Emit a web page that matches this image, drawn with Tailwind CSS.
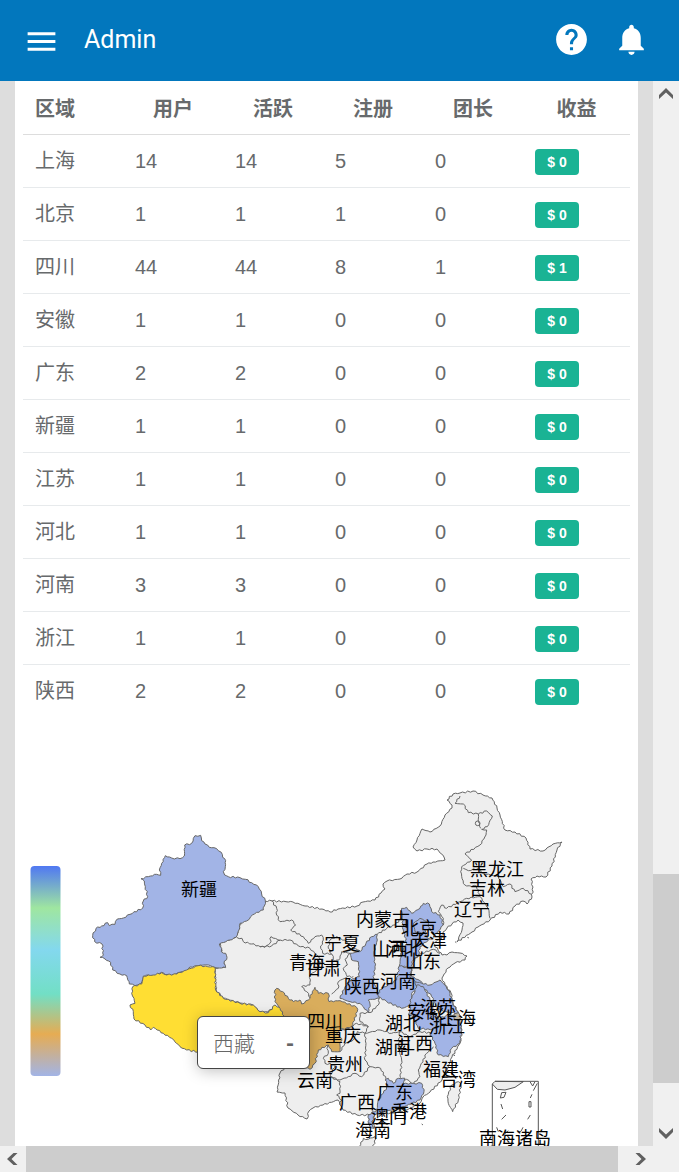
<!DOCTYPE html>
<html lang="zh-CN">
<head>
    <meta charset="UTF-8">
    <meta name="viewport" content="width=device-width, initial-scale=1.0">
    <title>Admin</title>
    <script src="https://cdn.jsdelivr.net/npm/@tailwindcss/browser@4"></script>
</head>
<body class="flex h-screen flex-col overflow-hidden bg-[#ddd] font-['Liberation_Sans','Noto_Sans_CJK_SC',sans-serif] text-[#676a6c]">
    <header class="flex h-[81px] shrink-0 items-center bg-[#0277bd] px-[23px] pb-[2px] text-white">
        <button type="button" aria-label="Menu" class="mt-1">
            <svg class="size-[37px]" viewBox="0 0 24 24" fill="currentColor"><path d="M3 18h18v-2H3v2zm0-5h18v-2H3v2zm0-7v2h18V6H3z"/></svg>
        </button>
        <h1 class="ml-6 flex-1 font-[Roboto] text-[25px] font-normal">Admin</h1>
        <div class="flex gap-[23px] pr-[6px]">
            <button type="button" aria-label="Help">
                <svg class="size-[37px]" viewBox="0 0 24 24" fill="currentColor"><path d="M12 2C6.48 2 2 6.48 2 12s4.480 10 10 10 10-4.480 10-10S17.520 2 12 2zm1 17h-2v-2h2v2zm2.070-7.750l-.9.920C13.450 12.900 13 13.500 13 15h-2v-.5c0-1.100.45-2.100 1.170-2.830l1.240-1.260c.37-.36.59-.86.59-1.410 0-1.100-.9-2-2-2s-2 .9-2 2H8c0-2.210 1.790-4 4-4s4 1.790 4 4c0 .88-.36 1.680-.93 2.250z"/></svg>
            </button>
            <button type="button" aria-label="Notifications">
                <svg class="size-[37px]" viewBox="0 0 24 24" fill="currentColor"><path d="M12 22c1.100 0 2-.9 2-2h-4c0 1.100.89 2 2 2zm6-6v-5c0-3.070-1.640-5.640-4.500-6.320V4c0-.83-.67-1.500-1.500-1.500s-1.500.67-1.500 1.500v.68C7.630 5.360 6 7.920 6 11v5l-2 2v1h16v-1l-2-2z"/></svg>
            </button>
        </div>
    </header>

    <div class="flex min-h-0 flex-1">
        <main class="min-w-0 flex-1 overflow-hidden px-[15px]">
            <div class="min-h-full bg-white">
                <div class="px-2">
                    <table class="w-full table-fixed border-collapse text-left text-xl">
                        <colgroup>
                            <col class="w-[100px]"><col class="w-[100px]"><col class="w-[100px]"><col class="w-[100px]"><col class="w-[100px]"><col>
                        </colgroup>
                        <thead>
                            <tr class="h-[53px] border-b border-[#ddd]">
                                <th class="px-3 pt-[3px]">区域</th>
                                <th class="px-3 pt-[3px] text-center">用户</th>
                                <th class="px-3 pt-[3px] text-center">活跃</th>
                                <th class="px-3 pt-[3px] text-center">注册</th>
                                <th class="px-3 pt-[3px] text-center">团长</th>
                                <th class="px-3 pt-[3px] text-center">收益</th>
                            </tr>
                        </thead>
                        <tbody id="rows"></tbody>
                    </table>
                </div>

                <div class="relative">
                    <svg class="block w-full" viewBox="15 717 623 429" role="img" aria-label="用户分布">
                        <defs>
                            <linearGradient id="scale" x1="0" y1="0" x2="0" y2="1">
                                <stop offset="0" stop-color="#5078f2"/>
                                <stop offset=".2" stop-color="#9fe6a0"/>
                                <stop offset=".4" stop-color="#83d8ee"/>
                                <stop offset=".61" stop-color="#72dfc5"/>
                                <stop offset=".8" stop-color="#e6ac53"/>
                                <stop offset="1" stop-color="#a2b4e6"/>
                            </linearGradient>
                        </defs>

                        <rect x="30.500" y="866" width="30" height="210" rx="4" fill="url(#scale)"/>

                        <g id="map" fill="#eee" stroke="#666" stroke-linejoin="round">
                            <!-- mainland -->
                            <path data-step="4" d="M265 901L272 901 293 902 305 906 322 909 330 912 338 909 357 906 363 902 375 900 381 893 385 889 383 884 387 881 400 879 407 874 417 872 427 864 433 862 445 860 444 857 437 849 427 849 417 851 413 847 417 840 422 829 430 832 440 826 445 815 452 808 452 805 447 800 453 794 460 793 473 791 483 795 492 798 497 808 500 815 505 830 515 832 526 838 530 849 543 851 553 844 562 842 557 850 552 866 546 877 537 876 531 879 533 887 532 897 527 904 523 901 515 906 509 914 500 912 490 920 478 927 472 932 457 942 462 930 463 923 458 920 452 924 447 928 443 932 442 938 433 943 438 950 442 955 447 955 452 952 460 953 467 956 465 960 455 963 448 968 442 978 445 985 451 993 453 1003 458 1012 460 1023 462 1030 460 1043 452 1057 448 1067 442 1080 430 1092 423 1097 420 1103 407 1110 393 1113 375 1114 372 1119 375 1128 368 1123 370 1115 357 1115 343 1110 338 1100 323 1105 313 1108 309 1111 307 1119 298 1115 288 1108 285 1093 277 1092 280 1073 290 1062 300 1050 274 1007 268 1012 260 1012 253 1005 240 1003 223 998 216 990 215 968 225 967 220 943 236 937 242 920 255 910Z"/>
                            <g transform="translate(80 820) scale(.3333)" stroke-width="3">
                                <path data-step="12" fill="#a2b4e6" d="M345 47L362 46 365 62 375 72 388 82 402 83 415 92 424 97 428 112 437 122 436 140 430 155 434 165 445 170 480 173 497 178 515 188 530 195 538 207 545 222 556 242 553 258 550 270 530 277 512 290 500 303 480 310 477 330 468 352 450 360 418 372 425 385 424 395 437 400 441 412 432 430 437 443 425 444 404 443 385 435 360 436 330 441 320 455 300 457 275 466 255 465 245 457 235 463 228 470 197 466 188 478 182 492 165 497 148 492 140 467 120 462 98 450 92 427 75 417 60 412 70 405 66 372 44 365 38 347 48 325 65 318 83 308 88 317 105 313 112 297 130 294 150 283 188 264 190 243 203 230 196 200 193 183 183 176 205 170 230 163 242 166 238 150 245 130 256 107 275 114 300 116 313 108 314 75 335 70 340 55Z"/>
                                <path data-step="12" fill="none" d="M470 352L486 355 490 365 515 372 535 377 555 382 570 370 573 350 600 362"/>
                            </g>
                            <g transform="translate(120 950) scale(.3333)" stroke-width="3">
                                <path data-step="12" fill="#ffde33" d="M38 110L65 102 70 78 100 75 125 68 140 75 170 72 200 60 235 47 285 52 287 120 310 145 360 160 400 165 420 185 445 188 465 165 480 172 495 200 495 300 235 306 200 300 180 290 155 265 130 250 100 232 92 240 75 225 42 207 40 185 30 165 45 160 42 145 35 130Z"/>
                            </g>
                            <!-- inner provinces -->
                            <g transform="translate(260 880) scale(.3333)" stroke-width="3">
                                <g fill="none">
                                    <path data-step="12" d="M35 62L50 85 50 105 60 125 95 120 107 135 92 150 130 170 145 190 165 170 185 165 190 180 182 205 188 220 215 222 225 245 240 235 245 215 270 220"/>
                                    <path data-step="12" d="M215 222L205 205 210 180 230 170 260 185 280 205 300 212"/>
                                    <path data-step="12" d="M0 200L35 198 60 180 90 180 115 198 150 205 185 240 170 270 150 285 150 315 125 320 140 335 152 355"/>
                                    <path data-step="12" d="M270 220L255 238 262 255 250 265 262 290 280 290"/>
                                    <path data-step="12" d="M262 290L235 305 235 325 215 342"/>
                                    <path data-step="12" d="M352 163L380 145 405 135 428 110"/>
                                    <path data-step="12" d="M358 355L355 375 330 398 300 400 300 425 325 440 315 460 360 450 395 460 420 455 450 470 480 455 520 460"/>
                                    <path data-step="12" d="M315 460L318 490 315 540 330 560 362 565 378 597"/>
                                    <path data-step="12" d="M420 455L415 500 425 540 420 600"/>
                                    <path data-step="12" d="M240 445L255 450 290 430 325 440"/>
                                    <path data-step="12" d="M240 515L255 490 280 480 292 455 315 460"/>
                                    <path data-step="12" d="M175 510L200 490 205 520 190 535 195 550 225 555 210 590 240 600 265 590 285 580 305 590 330 560"/>
                                    <path data-step="12" d="M210 590L240 605 240 640 230 645 245 660 240 675"/>
                                    <path data-step="12" d="M520 500L500 520 475 570 480 590 460 612 440 598 420 600"/>
                                </g>
                                <path data-step="12" fill="#d9ad5c" d="M50 325L68 335 85 355 100 365 120 360 125 372 145 360 165 322 175 340 205 340 207 365 240 362 290 382 292 395 275 440 240 450 230 460 245 475 240 495 240 515 215 515 205 495 175 510 165 550 150 568 130 560 120 530 72 420 72 408 60 385 45 365 45 330Z"/>
                                <path data-step="12" fill="#a2b4e6" d="M352 163L335 170 318 190 300 215 270 220 275 240 295 245 298 290 272 300 255 320 240 355 270 365 300 370 325 398 330 372 325 360 358 355 358 340 340 305 345 260 342 215 352 180Z"/>
                                <path data-step="12" fill="#a2b4e6" d="M425 85L440 82 455 100 480 85 490 70 508 72 515 95 540 105 550 135 530 160 505 180 480 200 475 225 455 245 455 265 418 258 425 215 440 190 430 150Z"/>
                                <path data-step="12" fill="#a2b4e6" d="M460 130L480 115 500 125 510 145 490 160 465 155Z"/>
                                <path data-step="12" d="M495 150L510 145 522 165 515 178 500 172Z"/>
                                <path data-step="12" fill="#a2b4e6" d="M418 258L455 265 455 290 480 302 490 315 455 340 455 375 425 385 380 365 355 350 358 330 385 315 410 300Z"/>
                                <path data-step="12" fill="#a2b4e6" d="M375 600L385 595 400 610 415 595 435 595 430 612 460 610 485 610 492 635 480 660 420 685 370 695 345 705 335 725 342 745 328 738 325 705 350 690 355 660 370 640 385 615Z"/>
                                <path data-step="12" d="M298 800L310 775 325 778 345 770 345 790 330 805Z"/>
                            </g>
                            <!-- north-east borders -->
                            <g transform="translate(400 780) scale(.3333)" stroke-width="3" fill="none">
                                <path data-step="12" d="M180 48L165 70 190 72 205 98 235 102 260 93 277 108 262 140 245 148 260 150 258 165 240 195 195 222 215 240 185 260 182 275 190 310 200 318 230 318"/>
                                <path data-step="12" d="M235 102L235 125 242 145"/>
                                <circle cx="233" cy="130" r="7"/>
                                <path data-step="12" d="M190 265L205 272 235 265 250 280 295 290 310 320 330 312 345 335 370 325 395 343"/>
                                <path data-step="12" d="M230 318L240 350 265 385 270 415"/>
                                <path data-step="12" d="M240 350L200 355 180 365 140 385 125 375 115 395 130 415 130 435"/>
                            </g>
                            <!-- east coast -->
                            <g transform="translate(380 900) scale(.3333)" stroke-width="3">
                                <path data-step="12" fill="none" d="M180 160L160 148 125 160 105 175 95 205 90 230 105 245"/>
                                <path data-step="12" fill="#a2b4e6" d="M180 240L150 255 125 250 105 245 110 265 140 270 155 290 170 320 190 335 235 340 218 310 210 280 195 255Z"/>
                                <path data-step="12" fill="#a2b4e6" d="M105 275L90 300 90 330 85 345 100 350 115 385 165 390 185 370 165 340 150 300 130 260 110 255Z"/>
                                <path data-step="12" fill="#a2b4e6" d="M185 350L165 380 150 400 165 430 175 465 205 470 215 445 240 430 245 390 240 365 235 345Z"/>
                                <path fill="#c3b7a4" d="M222 342L235 338 244 352 235 362 222 356Z"/>
                                <path data-step="12" d="M235 545L215 555 202 590 205 610 218 635 235 600 243 555Z"/>
                                <path d="M105 650l3 3M125 672l4 3M220 465l5 2M225 125l4 3M262 112l5 2"/>
                            </g>
                        </g>

                        <!-- south china sea inset -->
                        <g transform="translate(380 1010) scale(.3333)" fill="none" stroke="#555" stroke-width="3">
                            <path fill="#eee" d="M337 222L345 214 430 215 405 232 375 240 352 238Z"/>
                            <path d="M337 408V222M345 214H475V408M450 215L458 228 465 215M472 220L460 242M456 253L451 264M447 275H453V291H447ZM451 315L443 328M429 352L423 364 413 366M365 248L378 247 372 262 361 264ZM363 282L368 297M378 315L365 328M350 352L355 365M385 362L374 372"/>
                        </g>

                        <g class="font-['Noto_Sans_CJK_SC',sans-serif] text-[18px]" text-anchor="middle" fill="#000">
                            <text x="199" y="896">新疆</text>
                            <text x="497" y="876">黑龙江</text>
                            <text x="487" y="895">吉林</text>
                            <text x="472" y="916">辽宁</text>
                            <text x="383" y="926">内蒙古</text>
                            <text x="419" y="935">北京</text>
                            <text x="429" y="947">天津</text>
                            <text x="342" y="950">宁夏</text>
                            <text x="390" y="956">山西</text>
                            <text x="405" y="955">河北</text>
                            <text x="307" y="969">青海</text>
                            <text x="323" y="975">甘肃</text>
                            <text x="423" y="968">山东</text>
                            <text x="362" y="993">陕西</text>
                            <text x="398" y="988">河南</text>
                            <text x="325" y="1028">四川</text>
                            <text x="343" y="1042">重庆</text>
                            <text x="403" y="1030">湖北</text>
                            <text x="425" y="1018">安徽</text>
                            <text x="438" y="1014">江苏</text>
                            <text x="458" y="1025">上海</text>
                            <text x="447" y="1033">浙江</text>
                            <text x="393" y="1054">湖南</text>
                            <text x="415" y="1050">江西</text>
                            <text x="345" y="1071">贵州</text>
                            <text x="315" y="1087">云南</text>
                            <text x="441" y="1076">福建</text>
                            <text x="458" y="1086">台湾</text>
                            <text x="357" y="1109">广西</text>
                            <text x="395" y="1099">广东</text>
                            <text x="409" y="1118">香港</text>
                            <text x="389" y="1123">澳门</text>
                            <text x="373" y="1137">海南</text>
                            <text x="515" y="1145">南海诸岛</text>
                        </g>
                    </svg>

                    <div role="tooltip" class="absolute left-[182px] top-[299px] flex h-[53px] w-[113px] items-center justify-between rounded-md border border-[#444] bg-white px-[15px] font-['Noto_Sans_CJK_SC',sans-serif] text-[21px] font-light text-[#666] shadow-[1px_2px_15px_rgba(0,0,0,0.25)]">
                        <span>西藏</span>
                        <span class="font-black">-</span>
                    </div>
                </div>
            </div>
        </main>

        <!-- vertical scrollbar -->
        <div class="flex w-[26px] shrink-0 flex-col bg-[#f0f0f0] text-[#606060]">
            <svg class="size-[26px]" viewBox="0 0 26 26" fill="currentColor"><path d="M6 14L13 7l7 7v4L13 11.500l-7 6.500z"/></svg>
            <div class="grow-767"></div>
            <div class="h-[209px] bg-[#cdcdcd]"></div>
            <div class="grow-37"></div>
            <svg class="size-[26px]" viewBox="0 0 26 26" fill="currentColor"><path d="M6 12L13 19l7-7v-4L13 14.500l-7-6.500z"/></svg>
        </div>
    </div>

    <!-- horizontal scrollbar -->
    <div class="flex h-[26px] shrink-0 bg-[#f0f0f0] text-[#606060]">
        <svg class="size-[26px]" viewBox="0 0 26 26" fill="currentColor"><path d="M13.500 7L7 13l6.500 6h4L11.500 13l6-6z"/></svg>
        <div class="grow bg-[#cdcdcd]"></div>
        <svg class="mr-[26px] ml-[9px] size-[26px]" viewBox="0 0 26 26" fill="currentColor"><path d="M12.500 7L19 13l-6.500 6h-4L14.500 13l-6-6z"/></svg>
    </div>

    <script>
        const data = [
            ['上海', 14, 14, 5, 0, 0],
            ['北京', 1, 1, 1, 0, 0],
            ['四川', 44, 44, 8, 1, 1],
            ['安徽', 1, 1, 0, 0, 0],
            ['广东', 2, 2, 0, 0, 0],
            ['新疆', 1, 1, 0, 0, 0],
            ['江苏', 1, 1, 0, 0, 0],
            ['河北', 1, 1, 0, 0, 0],
            ['河南', 3, 3, 0, 0, 0],
            ['浙江', 1, 1, 0, 0, 0],
            ['陕西', 2, 2, 0, 0, 0]
        ];

        document.getElementById('rows').innerHTML = data.map(row => {
            const income = row[row.length - 1];
            const cells = row.slice(0, -1).map(v => `<td class="px-3">${v}</td>`).join('');
            return `<tr class="h-[53px] border-b border-[#e7eaec] last:border-b-0">${cells}
                <td class="px-3"><span class="mt-[3px] flex h-[26px] w-11 items-center justify-center rounded bg-[#1ab394] text-sm font-bold text-white">$ ${income}</span></td></tr>`;
        }).join('');

        // Break up the straight border segments so they read as natural coastlines
        document.querySelectorAll('#map path[data-step]').forEach(path => {
            const step = Number(path.dataset.step);
            const d = path.getAttribute('d');
            const n = d.match(/\d+/g).map(Number);
            const pts = [];
            for (let i = 0; i < n.length; i += 2) pts.push([n[i], n[i + 1]]);
            if (d.endsWith('Z')) pts.push(pts[0]);

            const out = [pts[0]];
            for (let i = 1; i < pts.length; i++) {
                const [x1, y1] = pts[i - 1];
                const [x2, y2] = pts[i];
                const len = Math.hypot(x2 - x1, y2 - y1);
                const parts = Math.max(1, Math.round(len / (step * 0.6)));
                for (let k = 1; k < parts; k++) {
                    const t = k / parts;
                    const shift = Math.sin((x1 + y2) * 12.9 + k * 78.2) * step * 0.2;
                    out.push([x1 + (x2 - x1) * t - (y2 - y1) / len * shift, y1 + (y2 - y1) * t + (x2 - x1) / len * shift]);
                }
                out.push([x2, y2]);
            }
            path.setAttribute('d', 'M' + out.map(p => p.map(v => v.toFixed(1)).join(' ')).join('L'));
        });
    </script>
</body>
</html>
